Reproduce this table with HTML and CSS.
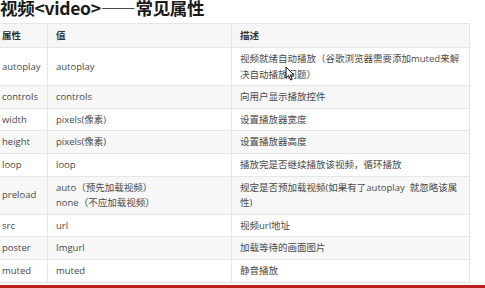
FILE: index.html
```html
<!DOCTYPE html>
<html lang="zh">
<head>
<meta charset="utf-8">
<link rel="stylesheet" href="styles.css">
</head>
<body>
<div class="page">
  <h1 class="title">视频&lt;video&gt;——常见属性</h1>
  <table class="attrs">
    <colgroup>
      <col class="c1"><col class="c2"><col class="c3">
    </colgroup>
    <thead>
      <tr><th>属性</th><th>值</th><th>描述</th></tr>
    </thead>
    <tbody>
      <tr><td>autoplay</td><td>autoplay</td><td class="desc-cell">视频就绪自动播放（谷歌浏览器需要添加muted来解决自动播放问题）<svg class="cursor" width="10" height="15" viewBox="0 0 10 15"><path d="M1 1 L1 12 L3.6 9.6 L5.6 14 L7.2 13.3 L5.3 9 L8.8 9 Z" fill="#fff" stroke="#111" stroke-width="1" stroke-linejoin="round"/></svg></td></tr>
      <tr><td>controls</td><td>controls</td><td>向用户显示播放控件</td></tr>
      <tr><td>width</td><td>pixels(像素)</td><td>设置播放器宽度</td></tr>
      <tr><td>height</td><td>pixels(像素)</td><td>设置播放器高度</td></tr>
      <tr><td>loop</td><td>loop</td><td>播放完是否继续播放该视频，循环播放</td></tr>
      <tr><td>preload</td><td>auto（预先加载视频）<br>none（不应加载视频）</td><td>规定是否预加载视频(如果有了autoplay&nbsp;&nbsp;就忽略该属性)</td></tr>
      <tr><td>src</td><td>url</td><td>视频url地址</td></tr>
      <tr><td>poster</td><td>Imgurl</td><td>加载等待的画面图片</td></tr>
      <tr><td>muted</td><td>muted</td><td>静音播放</td></tr>
    </tbody>
  </table>
  <div class="redbar"></div>
</div>
</body>
</html>
```

FILE: styles.css
```css
html, body {
  margin: 0;
  padding: 0;
  background: #ffffff;
  overflow: hidden;
}

.page {
  width: 485px;
  height: 288px;
  display: flex;
  flex-direction: column;
  font-family: "Open Sans", "Noto Sans CJK SC", sans-serif;
}

.title {
  margin: -1px 0 0 0;
  font-size: 17.5px;
  line-height: 18px;
  height: 24px;
  font-weight: 700;
  color: #1a1a1a;
  font-family: "Noto Sans CJK SC", sans-serif;
  letter-spacing: -0.3px;
}

.attrs {
  margin-left: -7px;
  width: 476px;
  border-collapse: collapse;
  table-layout: fixed;
  font-size: 9.5px;
  color: #4a4a4a;
}

.c1 { width: 54px; }
.c2 { width: 184px; }
.c3 { width: 238px; }

.attrs th,
.attrs td {
  border: 1px solid #e6e6e6;
  padding: 3px 4px 3px 8px;
  line-height: 15.6px;
  text-align: left;
  vertical-align: middle;
}

.attrs th {
  font-weight: 600;
  color: #333;
  background: #f6f6f6;
  height: 16px;
  padding-top: 3.5px;
  padding-bottom: 3.5px;
}

.attrs tbody tr:nth-child(even) td {
  background: #f7f7f7;
}

.desc-cell {
  position: relative;
}

.cursor {
  position: absolute;
  left: 53px;
  top: 18px;
}

.redbar {
  margin-top: auto;
  height: 3px;
  background: #b8221b;
}
```
